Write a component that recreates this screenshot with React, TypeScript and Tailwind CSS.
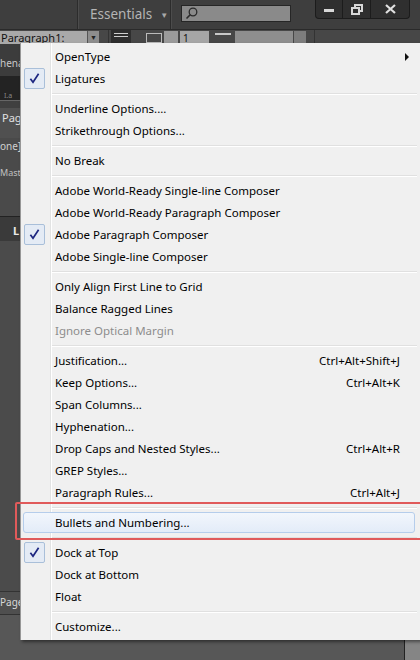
import React from 'react'

type Item =
  | { kind: 'sep' }
  | { kind: 'item'; label: string; checked?: boolean; shortcut?: string; submenu?: boolean; disabled?: boolean; hover?: boolean }

const items: Item[] = [
  { kind: 'item', label: 'OpenType', submenu: true },
  { kind: 'item', label: 'Ligatures', checked: true },
  { kind: 'sep' },
  { kind: 'item', label: 'Underline Options....' },
  { kind: 'item', label: 'Strikethrough Options...' },
  { kind: 'sep' },
  { kind: 'item', label: 'No Break' },
  { kind: 'sep' },
  { kind: 'item', label: 'Adobe World-Ready Single-line Composer' },
  { kind: 'item', label: 'Adobe World-Ready Paragraph Composer' },
  { kind: 'item', label: 'Adobe Paragraph Composer', checked: true },
  { kind: 'item', label: 'Adobe Single-line Composer' },
  { kind: 'sep' },
  { kind: 'item', label: 'Only Align First Line to Grid' },
  { kind: 'item', label: 'Balance Ragged Lines' },
  { kind: 'item', label: 'Ignore Optical Margin', disabled: true },
  { kind: 'sep' },
  { kind: 'item', label: 'Justification...', shortcut: 'Ctrl+Alt+Shift+J' },
  { kind: 'item', label: 'Keep Options...', shortcut: 'Ctrl+Alt+K' },
  { kind: 'item', label: 'Span Columns...' },
  { kind: 'item', label: 'Hyphenation...' },
  { kind: 'item', label: 'Drop Caps and Nested Styles...', shortcut: 'Ctrl+Alt+R' },
  { kind: 'item', label: 'GREP Styles...' },
  { kind: 'item', label: 'Paragraph Rules...', shortcut: 'Ctrl+Alt+J' },
  { kind: 'sep' },
  { kind: 'item', label: 'Bullets and Numbering...', hover: true },
  { kind: 'sep' },
  { kind: 'item', label: 'Dock at Top', checked: true },
  { kind: 'item', label: 'Dock at Bottom' },
  { kind: 'item', label: 'Float' },
  { kind: 'sep' },
  { kind: 'item', label: 'Customize...' },
]

const Check = () => (
  <svg width="13" height="13" viewBox="0 0 13 13">
    <path d="M2.4 6.8 L5 10.2 L10.6 1.8" fill="none" stroke="#1d2680" strokeWidth="1.7" strokeLinejoin="miter" />
  </svg>
)

const WindowButtons = () => (
  <div className="flex h-[19px] border border-t-0 border-[#1c1c1c] rounded-b-[4px] overflow-hidden bg-[#2f2f2f]">
    <div className="w-[27px] flex items-center justify-center border-r border-[#1c1c1c]">
      <div className="w-[10px] h-[3px] bg-[#d8d8d8] mt-[3px]" />
    </div>
    <div className="w-[28px] flex items-center justify-center border-r border-[#1c1c1c]">
      <svg width="12" height="11" viewBox="0 0 12 11">
        <rect x="4" y="1" width="7" height="6" fill="none" stroke="#d8d8d8" strokeWidth="2" />
        <rect x="1" y="4" width="7" height="6" fill="#2f2f2f" stroke="#d8d8d8" strokeWidth="2" />
      </svg>
    </div>
    <div className="w-[38px] flex items-center justify-center">
      <svg width="11" height="10" viewBox="0 0 11 10">
        <path d="M1 1 L10 9 M10 1 L1 9" stroke="#e0e0e0" strokeWidth="2.2" />
      </svg>
    </div>
  </div>
)

export default function App() {
  return (
    <div className="relative w-[420px] h-[660px] overflow-hidden bg-[#575757] font-['Noto_Sans',sans-serif] select-none">
      {/* Application bar */}
      <div className="h-[30px] bg-[#3e3e3e] flex items-start border-b border-[#2a2a2a]">
        <div className="w-[78px] h-full border-r border-[#2c2c2c]" />
        <div className="w-px h-full bg-[#4c4c4c]" />
        <div className="flex items-center h-full pl-[11px] w-[91px] text-[13.5px] text-[#b4b4b4]">
          Essentials
          <span className="ml-[8px] text-[8px] text-[#a8a8a8]">▼</span>
        </div>
        <div className="w-px h-full bg-[#2c2c2c]" />
        <div className="w-px h-full bg-[#4c4c4c]" />
        <div className="ml-[9px] mt-[5px] w-[110px] h-[17px] bg-[#8a8a8a] border border-[#262626] flex items-center pl-[3px]">
          <svg width="13" height="13" viewBox="0 0 13 13">
            <circle cx="8" cy="5" r="3.8" fill="none" stroke="#2a2a2a" strokeWidth="1.3" />
            <path d="M5.2 7.8 L1.5 11.5" stroke="#2a2a2a" strokeWidth="1.6" />
          </svg>
        </div>
        <div className="ml-[24px]">
          <WindowButtons />
        </div>
      </div>

      {/* Control toolbar */}
      <div className="h-[14px] bg-[#474747] flex items-start">
        <div className="mt-[1px] w-[87px] h-[13px] bg-[#a9a9a9] text-[11px] leading-[14px] text-[#111] pl-[1px] whitespace-nowrap">Paragraph1:</div>
        <div className="mt-[1px] w-[12px] h-[13px] bg-[#8d8d8d] border-l border-[#555] text-[7px] text-center text-[#222] leading-[14px]">▼</div>
        <div className="ml-[9px] w-px h-full bg-[#333]" />
        <div className="ml-[2px] w-[20px] h-full bg-[#2e2e2e] flex flex-col items-center gap-[2px] pt-[3px]">
          <div className="w-[14px] h-px bg-[#cfcfcf]" />
          <div className="w-[14px] h-px bg-[#cfcfcf]" />
        </div>
        <div className="ml-[15px] mt-[3px] w-[16px] h-[10px] border border-[#bbb]" />
        <div className="ml-[2px] mt-[1px] w-[14px] h-[13px] bg-[#9a9a9a]" />
        <div className="ml-[2px] mt-[1px] w-[29px] h-[13px] bg-[#a6a6a6] text-[10px] text-[#111] pl-[3px]">1</div>
        <div className="ml-[6px] mt-[3px] w-[16px] h-[2px] bg-[#c8c8c8]" />
        <div className="ml-[4px] mt-[1px] w-[58px] h-[13px] bg-[#8e8e8e]" />
        <div className="ml-[1px] mt-[1px] w-[12px] h-[13px] bg-[#7d7d7d]" />
        <div className="ml-[8px] w-px h-full bg-[#333]" />
      </div>

      {/* Panels behind menu */}
      <div className="w-[20px] flex flex-col text-[10px] leading-none whitespace-nowrap">
        <div className="h-[32px] bg-[#3c3c3c] text-[#c8c8c8] pt-[14px]">hena</div>
        <div className="h-[24px] bg-[#232323] text-[#888] text-[7px] flex items-end pb-[1px] pl-[4px]">I.a</div>
        <div className="h-[8px] bg-[#404040] border-t border-[#666]" />
        <div className="h-[30px] bg-[#505050] text-[#e0e0e0] text-[11px] pt-[4px] pl-[2px]">Pag</div>
        <div className="h-[26px] bg-[#4a4a4a] text-[#d0d0d0] text-[10px] pt-[3px]">one]</div>
        <div className="h-[52px] bg-[#4a4a4a] text-[#c0c0c0] text-[9px] pt-[4px]">Mast</div>
        <div className="h-[25px] bg-[#3a3a3a] border-t border-[#222] text-[#e8e8e8] text-[11px] font-bold pt-[8px] pl-[13px]">L</div>
        <div className="h-[350px] bg-[#4b4b4b]" />
        <div className="h-[24px] bg-[#4f4f4f] border-t border-b border-[#333] text-[#d8d8d8] text-[10px] pt-[5px]">Page</div>
      </div>
      <div className="absolute left-[404px] top-[640px] w-px h-[20px] bg-[#222]" />
      <div className="absolute left-[405px] top-[640px] w-[15px] h-[20px] bg-[#858585]" />

      {/* Dropdown menu */}
      <div className="absolute left-[20px] top-[43px] w-[400px] bg-[#f0f0f0] border-l border-[#979797] shadow-[2px_2px_3px_rgba(0,0,0,0.45)] pt-[3px] pb-[2px] text-[11.5px] text-[#000]">
        <div className="absolute left-[29px] top-0 bottom-0 w-px bg-[#e2e3e3]" />
        <div className="absolute left-[30px] top-0 bottom-0 w-px bg-[#ffffff]" />
        {items.map((it, i) =>
          it.kind === 'sep' ? (
            <div key={i} className="relative h-[8px] flex flex-col justify-center ml-[31px] mr-[3px]">
              <div className="h-px bg-[#e0e0e0]" />
              <div className="h-px bg-[#ffffff]" />
            </div>
          ) : (
            <div key={i} className="relative h-[22px] flex items-center pl-[34px] pr-[20px]">
              {it.hover && (
                <div className="absolute left-[2px] right-[5px] top-0 bottom-[1px] rounded-[3px] border border-[#b5cdeb] bg-gradient-to-b from-[#f2f6fc] to-[#e3ecf8]" />
              )}
              {it.checked && (
                <div className="absolute left-[3px] top-[0px] w-[21px] h-[21px] rounded-[2px] border border-[#a9bfd9] bg-[#e4ebf5] flex items-center justify-center">
                  <Check />
                </div>
              )}
              <span className={'relative flex-1 ' + (it.disabled ? 'text-[#8d8d8d]' : '')}>{it.label}</span>
              {it.shortcut && <span className="relative">{it.shortcut}</span>}
              {it.submenu && (
                <span className="absolute right-[11px] top-[7px] w-0 h-0 border-y-[4px] border-y-transparent border-l-[4px] border-l-[#111]" />
              )}
            </div>
          )
        )}
      </div>

      {/* Annotation highlight */}
      <div className="absolute left-[15px] top-[502px] w-[420px] h-[38px] border-2 border-[#e05a5a] rounded-[2px]" />
    </div>
  )
}
